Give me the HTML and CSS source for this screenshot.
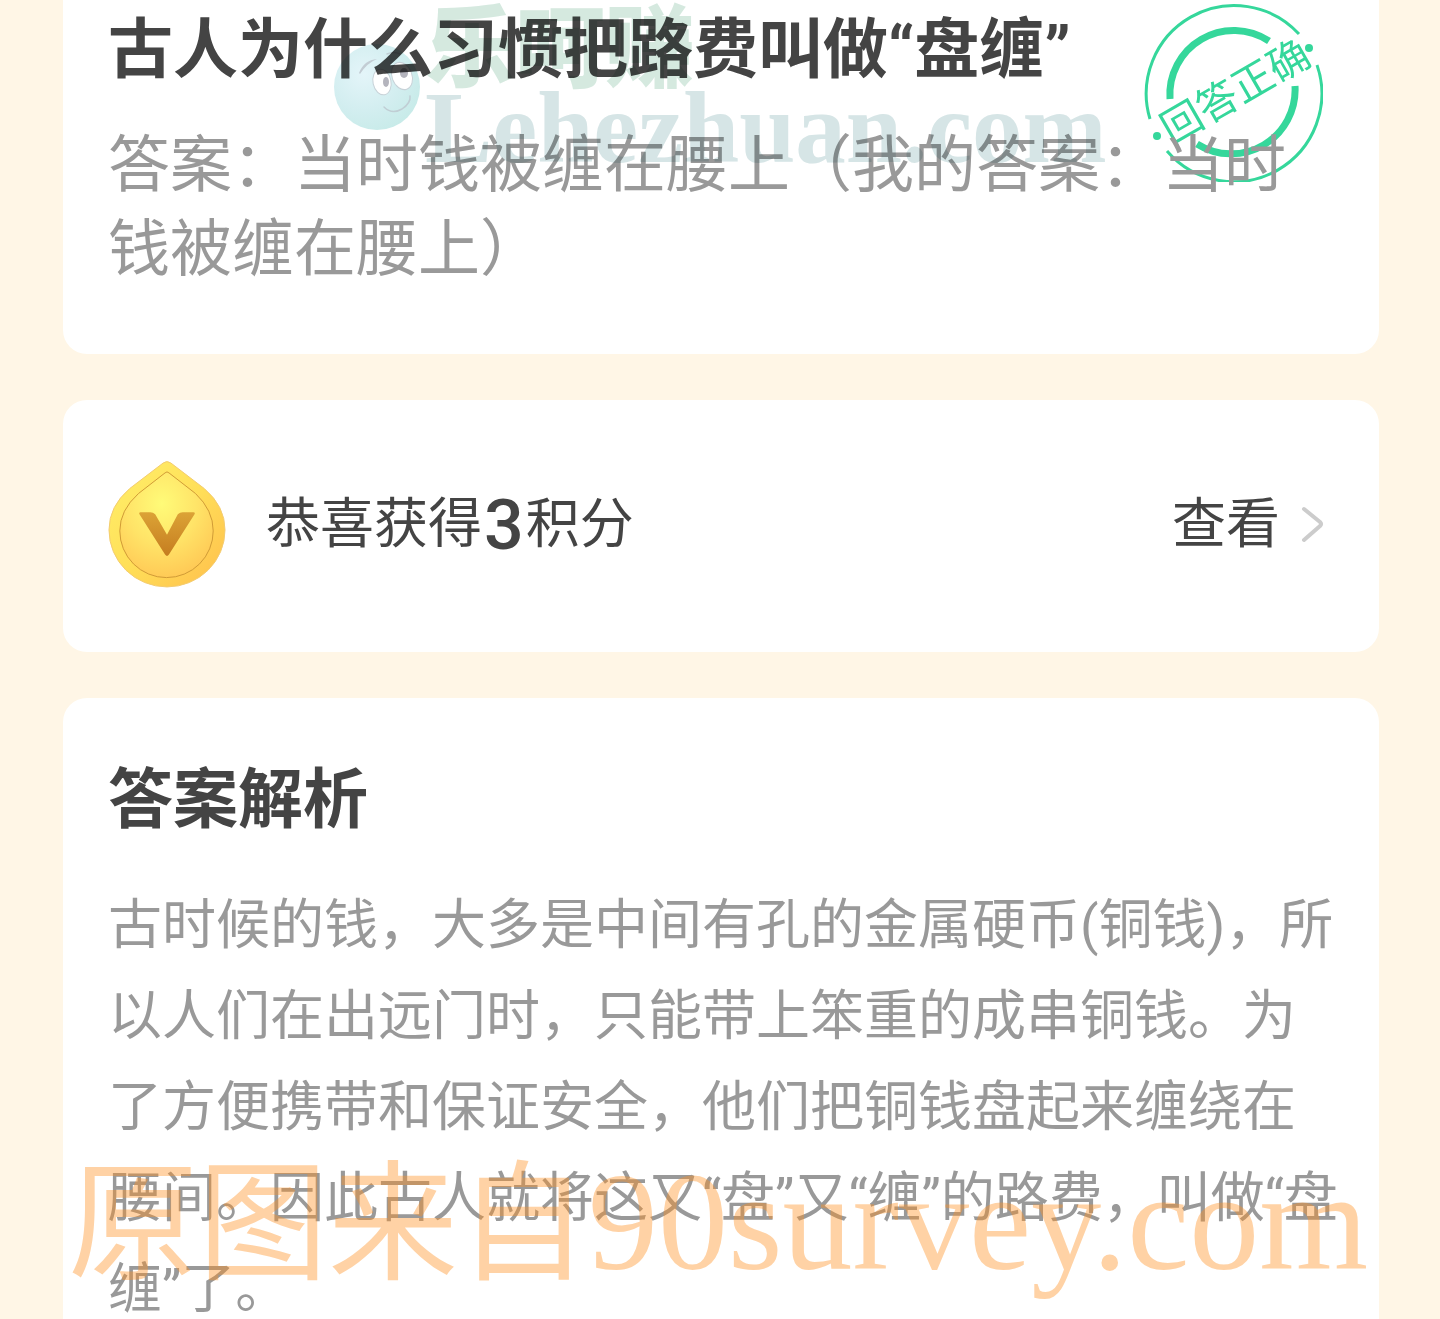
FILE: index.html
```html
<!DOCTYPE html>
<html lang="zh-CN">
<head>
<meta charset="utf-8">
<meta name="viewport" content="width=device-width, initial-scale=1">
<title>答案解析</title>
<link rel="stylesheet" href="styles.css">
</head>
<body>
<main class="page">

  <section class="card question">
    <svg class="stamp" viewBox="0 0 180 180" role="img" aria-label="回答正确">
      <g fill="none" stroke="#35d79b">
        <path stroke-width="3" d="M7 117A88 88 0 0 1 156 32"/>
        <path stroke-width="3" d="M174 63A88 88 0 0 1 24 149"/>
        <path stroke-width="7" d="M27 97A64 64 0 0 1 126 39"/>
        <path stroke-width="7" d="M152 84A64 64 0 0 1 54 142"/>
      </g>
      <g fill="#35d79b">
        <circle cx="166" cy="46" r="4"/>
        <circle cx="14" cy="134" r="4"/>
        <text class="stamp-text" x="92" y="104" text-anchor="middle" transform="rotate(-30 92 89)">回答正确</text>
      </g>
    </svg>
    <h1 class="title">古人为什么习惯把路费叫做“盘缠”</h1>
    <p class="answer">答案：当时钱被缠在腰上（我的答案：当时钱被缠在腰上）</p>
  </section>

  <section class="card reward">
    <svg class="coin" viewBox="0 0 120 130" aria-hidden="true">
      <defs>
        <radialGradient id="coin-face" cx="0.45" cy="0.3" r="0.75">
          <stop offset="0" stop-color="#fffb78"/>
          <stop offset="0.5" stop-color="#ffe468"/>
          <stop offset="1" stop-color="#ffc653"/>
        </radialGradient>
        <linearGradient id="coin-edge" x1="0" y1="0" x2="1" y2="1">
          <stop offset="0" stop-color="#fff06a"/>
          <stop offset="0.5" stop-color="#ffdf58"/>
          <stop offset="1" stop-color="#ffbe4c"/>
        </linearGradient>
        <linearGradient id="coin-v" x1="0" y1="0" x2="0" y2="1">
          <stop offset="0" stop-color="#dca336"/>
          <stop offset="1" stop-color="#c57d20"/>
        </linearGradient>
      </defs>
      <path fill="url(#coin-edge)" stroke="#f3cb70" d="M56 2Q60 -1 64 2L98 28Q119 46 119 70A59 58 0 0 1 1 70Q1 46 22 28Z"/>
      <path fill="url(#coin-face)" stroke="#cf9a35" d="M58 12Q60 10 62 12L89 33Q107 50 107 71A47 47 0 0 1 12 71Q12 50 31 33Z"/>
      <path fill="url(#coin-v)" d="M33 52H43Q46 52 48 54L60 75L71 54Q73 52 76 52H87Q89 52 88 54L62 95Q60 98 58 95L32 54Q31 52 33 52Z"/>
    </svg>
    <p class="reward-text">恭喜获得<span class="points">3</span>积分</p>
    <a class="view-link" href="#points">查看
      <svg class="arrow" viewBox="0 0 24 40" aria-hidden="true">
        <path fill="none" stroke="#ccc" stroke-width="4" stroke-linecap="round" stroke-linejoin="round" d="M4 4L20 17Q22 19 20 21L4 35"/>
      </svg>
    </a>
  </section>

  <section class="card analysis">
    <h2 class="title">答案解析</h2>
    <p class="analysis-text">古时候的钱，大多是中间有孔的金属硬币(铜钱)，所以人们在出远门时，只能带上笨重的成串铜钱。为了方便携带和保证安全，他们把铜钱盘起来缠绕在腰间。因此古人就将这又“盘”又“缠”的路费，叫做“盘缠”了。</p>
  </section>

  <div class="mark mark-top">
    <svg class="ball" viewBox="0 0 88 88" aria-hidden="true">
      <defs>
        <radialGradient id="ball-fill" cx="0.35" cy="0.35" r="0.7">
          <stop offset="0" stop-color="#e4f5f9"/>
          <stop offset="0.6" stop-color="#d3eef0"/>
          <stop offset="1" stop-color="#c8ebe9"/>
        </radialGradient>
      </defs>
      <circle cx="44" cy="44" r="43" fill="url(#ball-fill)"/>
      <g fill="#fff" stroke="#c8d2d8">
        <ellipse cx="49" cy="39" rx="9" ry="13" transform="rotate(-12 49 39)"/>
        <ellipse cx="69" cy="33" rx="10" ry="14" transform="rotate(-20 69 33)"/>
      </g>
      <ellipse cx="53" cy="39" rx="3" ry="5" fill="#b4b4bd"/>
      <ellipse cx="71" cy="30" rx="4" ry="5" fill="#b4b4bd"/>
      <path fill="#c3cdd4" d="M26 30Q31 17 44 16Q34 20 27 31Z"/>
      <g fill="none" stroke="#c0ced4" stroke-width="1.5" stroke-linecap="round">
        <path d="M51 64Q59 72 69 66Q78 60 77 53"/>
        <path d="M54 11Q61 8 67 11"/>
      </g>
    </svg>
    <div class="mark-names">
      <span class="mark-cn">乐呵赚</span>
      <span class="mark-url">Lehezhuan.com</span>
    </div>
  </div>
  <div class="mark mark-bottom">原图来自<span class="mark-site">90survey.com</span></div>

</main>
</body>
</html>
```
FILE: styles.css
```css
* {
  box-sizing: border-box;
  margin: 0;
  padding: 0;
}

body {
  height: 100vh;
  overflow: hidden;
  background-color: #fff6e6;
  font-family: Roboto, "Noto Sans CJK SC", sans-serif;
  color: #444;
}

.page {
  position: relative;
  display: flex;
  flex-direction: column;
  gap: 46px;
  padding: 0 61px 0 63px;
}

.card {
  position: relative;
  padding: 54px 40px 54px 45px;
  border-radius: 24px;
  background-color: #fff;
}

.title {
  font-size: 65px;
  font-weight: 700;
  line-height: 96px;
}

/* question */
.question {
  padding-top: 2px;
  padding-bottom: 62px;
  border-top-left-radius: 0;
  border-top-right-radius: 0;
}

.answer {
  position: relative;
  margin-top: 26px;
  font-size: 62px;
  line-height: 84px;
  color: #999;
}

.stamp {
  position: absolute;
  top: 2px;
  right: 56px;
  width: 180px;
  height: 180px;
}

.stamp-text {
  font-size: 41px;
  font-weight: 400;
}

/* reward */
.reward {
  display: flex;
  align-items: center;
  min-height: 252px;
  padding-top: 52px;
  padding-right: 55px;
}

.coin {
  width: 118px;
  height: 128px;
  margin-right: 40px;
}

.reward-text {
  display: flex;
  align-items: center;
  font-size: 54px;
  line-height: 80px;
}

.points {
  margin: 0 2px;
  font-size: 70px;
  font-weight: 500;
}

.view-link {
  display: flex;
  align-items: center;
  gap: 20px;
  margin-left: auto;
  font-size: 54px;
  line-height: 80px;
  color: #444;
  text-decoration: none;
}

.arrow {
  width: 24px;
  height: 40px;
}

/* analysis */
.analysis-text {
  margin-top: 32px;
  font-size: 54px;
  line-height: 91px;
  color: #999;
}

/* watermarks over the cards */
.mark {
  position: absolute;
  display: flex;
  white-space: nowrap;
  pointer-events: none;
}

.mark-top {
  top: 6px;
  left: 333px;
  mix-blend-mode: multiply;
}

.ball {
  width: 88px;
  height: 88px;
  margin: 37px 4px 0 0;
}

.mark-names {
  display: flex;
  flex-direction: column;
}

.mark-cn {
  font-size: 90px;
  font-weight: 900;
  line-height: 88px;
  color: #d5e9df;
}

.mark-url {
  font-family: "Liberation Serif", serif;
  font-size: 101px;
  font-weight: 700;
  line-height: 68px;
  color: #d6e5e6;
}

.mark-bottom {
  top: 1142px;
  left: 68px;
  align-items: baseline;
  font-size: 130px;
  line-height: 160px;
  color: rgba(255, 142, 30, 0.4);
}

.mark-site {
  font-family: "Liberation Serif", serif;
  font-size: 140px;
}
```
